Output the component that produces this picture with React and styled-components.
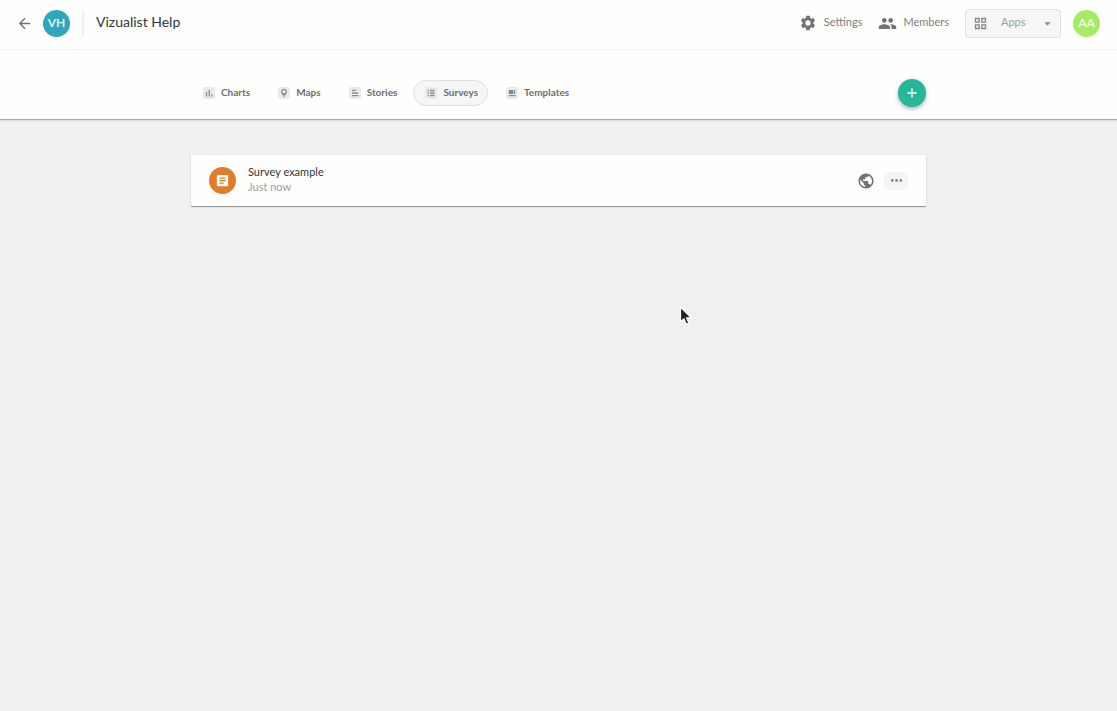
import React from "react";
import styled, { createGlobalStyle } from "styled-components";
import {
  MdAdd,
  MdArrowBack,
  MdArrowDropDown,
  MdArticle,
  MdMoreHoriz,
  MdPeople,
  MdPublic,
  MdSettings,
} from "react-icons/md";

const GlobalStyle = createGlobalStyle`
  *, *::before, *::after { box-sizing: border-box; }
  body {
    margin: 0;
    background: #f0f0ef;
    color: #2c383d;
    font-family: Lato, "Liberation Sans", sans-serif;
  }
  button, select { font-family: inherit; }
  svg { display: block; flex: none; }
`;

const Page = styled.div`
  position: relative;
  min-height: 100vh;
`;

const Header = styled.header`
  display: flex;
  align-items: center;
  height: 50px;
  padding: 0 17px 3px 16px;
  background: #fefefd;
  border-bottom: 1px solid #f2f2f1;
`;

const PlainButton = styled.button`
  display: flex;
  align-items: center;
  justify-content: center;
  padding: 0;
  border: 0;
  background: none;
  color: #6f7373;
  cursor: pointer;
`;

const Avatar = styled.span`
  display: flex;
  align-items: center;
  justify-content: center;
  flex: none;
  width: 27px;
  height: 27px;
  margin-left: ${(p) => p.$gap};
  border-radius: 50%;
  background: ${(p) => p.$color};
  color: ${(p) => p.$ink};
  font-size: 12px;
  font-weight: 700;
  line-height: 16px;
`;

const Divider = styled.span`
  width: 2px;
  height: 26px;
  margin: 0 12px;
  background: #efefee;
`;

const Title = styled.h1`
  margin: 0;
  padding-bottom: 2px;
  font-size: 14px;
  font-weight: 400;
  line-height: 20px;
`;

const HeaderActions = styled.div`
  display: flex;
  align-items: center;
  margin-left: auto;
`;

const HeaderLink = styled.a`
  display: flex;
  align-items: center;
  gap: 7px;
  margin-right: 16px;
  color: #6f7373;
  font-size: 11px;
  line-height: 16px;
  text-decoration: none;

  & + & { gap: 6px; }

  span {
    padding-bottom: 3px;
    color: #7b7f7f;
  }
`;

const AppsPicker = styled.label`
  display: flex;
  align-items: center;
  width: 96px;
  height: 29px;
  padding: 0 5px 0 8px;
  border: 1px solid #e0e2e1;
  border-radius: 4px;
  background: #f5f6f5;
  color: #858786;
`;

const AppsSelect = styled.select`
  flex: 1;
  min-width: 0;
  padding: 0 0 2px 14px;
  border: 0;
  background: none;
  color: #9b9d9c;
  font-size: 11px;
  line-height: 16px;
  appearance: none;
`;

const Toolbar = styled.div`
  padding: 28px 16px 11px;
  background: #fefefd;
  border-bottom: 1px solid #a9a9a8;
  box-shadow: 0 1px 1px #dededd;
`;

const Container = styled.div`
  display: flex;
  align-items: center;
  justify-content: space-between;
  max-width: 735px;
  margin: 0 auto;
`;

const Tabs = styled.nav`
  display: flex;
  gap: 6px;
`;

const Tab = styled.button`
  display: flex;
  align-items: center;
  gap: 6px;
  height: 26px;
  padding: 0 9px 0 11px;
  border: 1px solid ${(p) => (p.$active ? "#e0e2e1" : "transparent")};
  border-radius: 13px;
  background: ${(p) => (p.$active ? "#f5f7f6" : "transparent")};
  color: #6c6f6e;
  font-size: 10px;
  font-weight: 700;
  line-height: 16px;
  cursor: pointer;

  span { padding-bottom: 2px; }
`;

const AddButton = styled(PlainButton)`
  width: 28px;
  height: 28px;
  margin: 1px 0;
  border-radius: 50%;
  background: #26b798;
  color: #fff;
  box-shadow: 0 2px 4px rgba(0, 0, 0, 0.3);
`;

const Main = styled.main`
  padding: 35px 16px;
`;

const SurveyRow = styled.article`
  display: flex;
  align-items: center;
  max-width: 735px;
  height: 51px;
  margin: 0 auto;
  padding: 0 18px;
  border-radius: 1px;
  background: #fefefd;
  box-shadow: 0 1px 1px rgba(0, 0, 0, 0.4), 0 0 1px rgba(0, 0, 0, 0.12);
`;

const SurveyBadge = styled.span`
  display: flex;
  align-items: center;
  justify-content: center;
  width: 27px;
  height: 27px;
  border-radius: 50%;
  background: #df7d2c;
  color: #fff;
`;

const SurveyText = styled.div`
  flex: 1;
  padding: 0 12px 3px;
  font-size: 11px;
  line-height: 15px;
`;

const SurveyName = styled.h2`
  margin: 0;
  font-size: inherit;
  font-weight: 400;
`;

const SurveyTime = styled.p`
  margin: 0;
  color: #a0a0a0;
`;

const MoreButton = styled(PlainButton)`
  width: 24px;
  height: 18px;
  margin-left: 9px;
  border-radius: 4px;
  background: #f4f6f5;
  color: #858786;
`;

const Pointer = styled.svg`
  position: absolute;
  left: 678px;
  top: 305px;
  pointer-events: none;
`;

function TabIcon({ children }) {
  return (
    <svg width="12" height="12" viewBox="0 0 12 12" fill="none" stroke="#8a8c8b" aria-hidden="true">
      <rect width="12" height="12" rx="2" fill="#e9ebea" stroke="none" />
      {children}
    </svg>
  );
}

const tabs = [
  { name: "Charts", icon: <path d="M3.5 5v4.5M6.3 3v6.5M9 7.5v2" strokeWidth="1.3" /> },
  {
    name: "Maps",
    icon: (
      <>
        <circle cx="6" cy="4.7" r="2.3" strokeWidth="1.3" />
        <path d="M4.3 7.7h3.4M6 7v3" strokeWidth="1.2" />
      </>
    ),
  },
  { name: "Stories", icon: <path d="M3 3.4h4M3 6h6M3 8.6h6.5" strokeWidth="1.4" /> },
  {
    name: "Surveys",
    icon: <path d="M2.6 3.5h1.3M5 3.5h4.5M2.6 6h1.3M5 6h4.5M2.6 8.5h1.3M5 8.5h4.5" strokeWidth="1.3" />,
  },
  {
    name: "Templates",
    icon: (
      <>
        <path d="M2.8 3h4.4v4H2.8z" fill="#858786" stroke="none" />
        <path d="M8.5 3v4M2.8 8.6h6.8" strokeWidth="1.3" />
      </>
    ),
  },
];

export default function App() {
  return (
    <Page>
      <GlobalStyle />
      <Header>
        <PlainButton aria-label="Back">
          <MdArrowBack size={17} />
        </PlainButton>
        <Avatar $gap="10px" $color="#2fa6ba" $ink="#d9f3f4">VH</Avatar>
        <Divider />
        <Title>Vizualist Help</Title>
        <HeaderActions>
          <HeaderLink href="#settings">
            <MdSettings size={18} />
            <span>Settings</span>
          </HeaderLink>
          <HeaderLink href="#members">
            <MdPeople size={19} />
            <span>Members</span>
          </HeaderLink>
          <AppsPicker>
            <svg width="13" height="13" viewBox="0 0 13 13" fill="none" stroke="currentColor" aria-hidden="true">
              <path
                d="M1.5 1.5h3.7v3.7H1.5zM7.8 1.5h3.7v3.7H7.8zM1.5 7.8h3.7v3.7H1.5zM7.8 7.8h3.7v3.7H7.8z"
                strokeWidth="1.3"
              />
            </svg>
            <AppsSelect aria-label="Apps">
              <option>Apps</option>
            </AppsSelect>
            <MdArrowDropDown size={15} />
          </AppsPicker>
          <Avatar $gap="12px" $color="#a5ec66" $ink="#eefbe2">AA</Avatar>
        </HeaderActions>
      </Header>
      <Toolbar>
        <Container>
          <Tabs aria-label="Content types">
            {tabs.map(({ name, icon }) => (
              <Tab key={name} $active={name === "Surveys"} aria-pressed={name === "Surveys"}>
                <TabIcon>{icon}</TabIcon>
                <span>{name}</span>
              </Tab>
            ))}
          </Tabs>
          <AddButton aria-label="Add survey">
            <MdAdd size={16} />
          </AddButton>
        </Container>
      </Toolbar>
      <Main>
        <SurveyRow>
          <SurveyBadge>
            <MdArticle size={15} />
          </SurveyBadge>
          <SurveyText>
            <SurveyName>Survey example</SurveyName>
            <SurveyTime>Just now</SurveyTime>
          </SurveyText>
          <PlainButton aria-label="Public">
            <MdPublic size={18} />
          </PlainButton>
          <MoreButton aria-label="More actions">
            <MdMoreHoriz size={17} />
          </MoreButton>
        </SurveyRow>
      </Main>
      <Pointer width="16" height="22" viewBox="0 0 16 22" aria-hidden="true">
        <path
          d="M2.5 2v15l3.4-3.2 2.3 5.4 2.6-1.1-2.3-5.3h4.7z"
          fill="#222"
          stroke="#fff"
          strokeWidth="1.2"
          strokeLinejoin="round"
        />
      </Pointer>
    </Page>
  );
}
